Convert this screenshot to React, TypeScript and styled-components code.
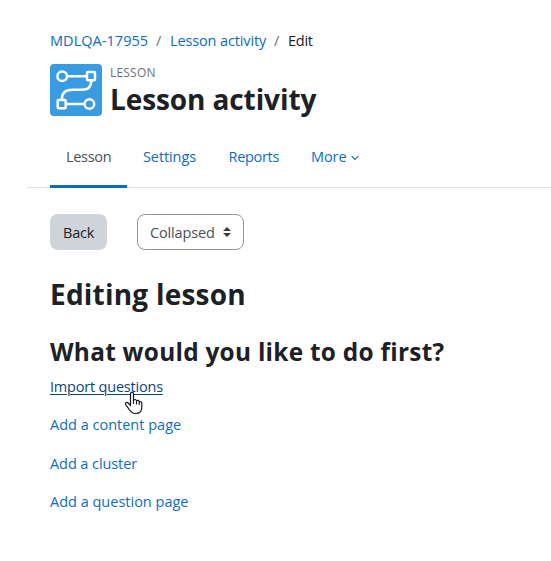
import React from "react";
import styled, { createGlobalStyle } from "styled-components";

const GlobalStyle = createGlobalStyle`
  * { box-sizing: border-box; }
  body {
    margin: 0;
    background: #fff;
    color: #1d2125;
    font-family: "Open Sans", "Noto Sans", sans-serif;
    font-size: 14.5px;
    font-weight: 400;
    line-height: 22px;
    overflow: hidden;
  }
`;

const Page = styled.main`
  height: 561px;
  padding-top: 30px;
  overflow: hidden;
`;

const Text = styled.span<{ $track?: number }>`
  letter-spacing: ${(p) => p.$track ?? 0}px;
  white-space: nowrap;
`;

const Link = styled.a<{ $track?: number; $hovered?: boolean }>`
  color: ${(p) => (p.$hovered ? "#0a4580" : "#0f6cbf")};
  letter-spacing: ${(p) => p.$track ?? 0}px;
  text-decoration: ${(p) => (p.$hovered ? "underline" : "none")};
  text-decoration-thickness: 1px;
  text-underline-offset: 2px;
  white-space: nowrap;
`;

const Breadcrumb = styled.nav`
  display: grid;
  grid-template-columns: 106px 14px 104px 14px auto;
  padding-left: 50px;
  height: 22px;
`;

const Slash = styled.span`
  color: #6a737b;
`;

const Header = styled.header`
  display: flex;
  gap: 8px;
  margin-top: 12px;
  padding-left: 50px;
  height: 52px;
`;

const ActivityIcon = styled.svg`
  width: 52px;
  height: 52px;
  flex: none;
`;

const Eyebrow = styled.div`
  color: #6a737b;
  font-size: 12px;
  line-height: 18px;
`;

const Title = styled.h1<{ $track?: number }>`
  margin: 0;
  font-size: 28px;
  font-weight: 700;
  line-height: 34px;
  letter-spacing: ${(p) => p.$track ?? 0}px;
  white-space: nowrap;
`;

const Tabs = styled.nav`
  display: flex;
  height: 60px;
  margin: 12px 0 0 27px;
  padding-left: 23px;
  border-bottom: 1px solid #dee2e6;
`;

const Tab = styled.a<{ $width: number; $active?: boolean }>`
  display: flex;
  align-items: flex-start;
  gap: 5px;
  width: ${(p) => p.$width}px;
  height: 60px;
  padding: 18px 0 0 16px;
  color: ${(p) => (p.$active ? "#495057" : "#0f6cbf")};
  border-bottom: 3px solid ${(p) => (p.$active ? "#0f6cbf" : "transparent")};
`;

const Chevron = styled.svg`
  width: 8px;
  height: 6px;
  margin-top: 9px;
`;

const Controls = styled.div`
  display: flex;
  gap: 30px;
  margin-top: 26px;
  padding-left: 50px;
`;

const BackButton = styled.button`
  width: 57px;
  height: 36px;
  padding: 2px 0 0 13px;
  border: 0;
  border-radius: 8px;
  background: #ced4da;
  color: #1d2125;
  font: inherit;
  text-align: left;
`;

const Select = styled.button`
  display: flex;
  align-items: center;
  justify-content: space-between;
  width: 107px;
  height: 36px;
  padding: 1px 12px 0;
  border: 1px solid #8f959e;
  border-radius: 8px;
  background: #fff;
  color: #495057;
  font: inherit;
`;

const Sorter = styled.svg`
  width: 8px;
  height: 10px;
  margin-bottom: 1px;
`;

const Heading = styled(Title).attrs({ as: "h2" })`
  margin: 27px 0 0 50px;
`;

const Subheading = styled.h3<{ $track?: number }>`
  margin: 26px 0 0 50px;
  font-size: 24.4px;
  font-weight: 700;
  line-height: 30px;
  letter-spacing: ${(p) => p.$track ?? 0}px;
  white-space: nowrap;
`;

const Actions = styled.div`
  display: flex;
  flex-direction: column;
  align-items: flex-start;
  gap: 16.4px;
  margin: 9px 0 0 50px;
`;

const ActionItem = styled.div`
  position: relative;
`;

const Pointer = styled.svg`
  position: absolute;
  left: 74px;
  top: 15px;
  width: 19px;
  height: 24px;
`;

export default function App() {
  return (
    <Page>
      <GlobalStyle />
      <Breadcrumb>
        <Link $track={0.04}>MDLQA-17955</Link>
        <Slash>/</Slash>
        <Link $track={-0.13}>Lesson activity</Link>
        <Slash>/</Slash>
        <Text $track={-0.25}>Edit</Text>
      </Breadcrumb>
      <Header>
        <ActivityIcon viewBox="0 0 52 52">
          <rect width="52" height="52" rx="4" fill="#399be2" />
          <g fill="none" stroke="#fff" strokeWidth="2.5">
            <circle cx="12.2" cy="12.2" r="4.8" />
            <rect x="37" y="8" width="8" height="8.3" rx="1" />
            <rect x="7.7" y="36" width="8" height="8.3" rx="1" />
            <circle cx="39.4" cy="40" r="4.8" />
            <path d="M17.5 12.2H37M16 40H34.5M41.3 17C41.3 23 38 25.8 32 25.8H22.5C15 25.8 11.8 29 11.8 35.5" />
          </g>
        </ActivityIcon>
        <div>
          <Eyebrow><Text $track={0.2}>LESSON</Text></Eyebrow>
          <Title $track={-0.1}>Lesson activity</Title>
        </div>
      </Header>
      <Tabs>
        <Tab $width={77} $active><Text $track={-0.3}>Lesson</Text></Tab>
        <Tab $width={85.5}><Text $track={-0.1}>Settings</Text></Tab>
        <Tab $width={82.5}><Text $track={-0.3}>Reports</Text></Tab>
        <Tab $width={80}>
          <Text $track={-0.1}>More</Text>
          <Chevron viewBox="0 0 8 6"><path d="M.7 1.2 4 4.5 7.3 1.2" fill="none" stroke="currentColor" strokeWidth="1.2" /></Chevron>
        </Tab>
      </Tabs>
      <Controls>
        <BackButton><Text $track={-0.2}>Back</Text></BackButton>
        <Select>
          <Text $track={-0.15}>Collapsed</Text>
          <Sorter viewBox="0 0 8 10"><path d="M4 0 8 4H0ZM0 6H8L4 10Z" fill="#343a40" /></Sorter>
        </Select>
      </Controls>
      <Heading $track={0.22}>Editing lesson</Heading>
      <Subheading $track={0.27}>What would you like to do first?</Subheading>
      <Actions>
        <ActionItem>
          <Link $hovered $track={-0.2}>Import questions</Link>
          <Pointer viewBox="0 0 19 24">
            <path d="M6.5 14V3C6.5.5 9.5.5 9.5 3V9.5C10 8 12.5 8.2 12.5 10 13.3 8.8 15.2 9.2 15.2 11 16.3 10.2 17.8 10.8 17.8 12.5V16.5C17.8 20.5 15.5 22.5 11.5 22.5 7.5 22.5 6.2 20.5 4.5 17.5L1.8 13.8C.7 12 2.8 10.8 4.2 12L6.5 14.5Z" fill="#fff" stroke="#16161d" strokeWidth="1.2" strokeLinejoin="round" />
            <path d="M9.5 9V13M12.5 10V13.5M15.2 11V14" stroke="#16161d" strokeWidth="1.1" />
          </Pointer>
        </ActionItem>
        <Link>Add a content page</Link>
        <Link $track={-0.08}>Add a cluster</Link>
        <Link>Add a question page</Link>
      </Actions>
    </Page>
  );
}
